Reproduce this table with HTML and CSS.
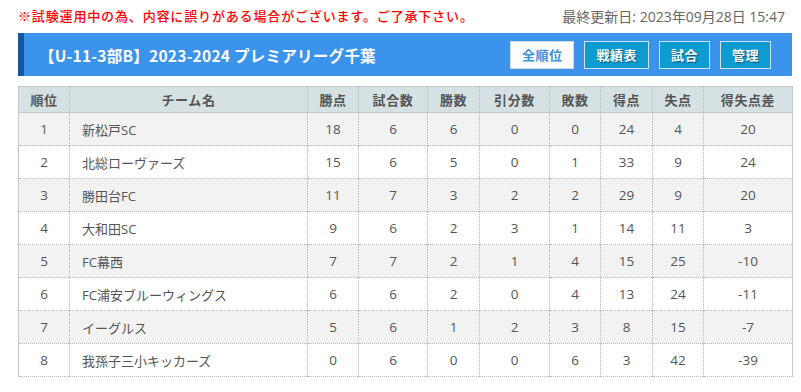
FILE: index.html
```html
<!DOCTYPE html>
<html lang="ja">
<head>
<meta charset="utf-8">
<title>順位表</title>
<link rel="stylesheet" href="styles.css">
</head>
<body>
<div class="page">
  <div class="topline">
    <span class="notice">※試験運用中の為、内容に誤りがある場合がございます。ご了承下さい。</span>
    <span class="updated">最終更新日: 2023年09月28日 15:47</span>
  </div>
  <div class="titlebar">
    <h1 class="title">【U-11-3部B】2023-2024 プレミアリーグ千葉</h1>
    <nav class="btns">
      <a class="btn btn-active">全順位</a>
      <a class="btn">戦績表</a>
      <a class="btn">試合</a>
      <a class="btn">管理</a>
    </nav>
  </div>
  <table class="standings">
    <colgroup>
      <col class="c1"><col class="c2"><col class="c3"><col class="c4"><col class="c5"><col class="c6"><col class="c7"><col class="c8"><col class="c9"><col class="c10">
    </colgroup>
    <thead>
      <tr><th>順位</th><th>チーム名</th><th>勝点</th><th>試合数</th><th>勝数</th><th>引分数</th><th>敗数</th><th>得点</th><th>失点</th><th>得失点差</th></tr>
    </thead>
    <tbody>
      <tr><td>1</td><td class="team">新松戸SC</td><td>18</td><td>6</td><td>6</td><td>0</td><td>0</td><td>24</td><td>4</td><td>20</td></tr>
      <tr><td>2</td><td class="team">北総ローヴァーズ</td><td>15</td><td>6</td><td>5</td><td>0</td><td>1</td><td>33</td><td>9</td><td>24</td></tr>
      <tr><td>3</td><td class="team">勝田台FC</td><td>11</td><td>7</td><td>3</td><td>2</td><td>2</td><td>29</td><td>9</td><td>20</td></tr>
      <tr><td>4</td><td class="team">大和田SC</td><td>9</td><td>6</td><td>2</td><td>3</td><td>1</td><td>14</td><td>11</td><td>3</td></tr>
      <tr><td>5</td><td class="team">FC幕西</td><td>7</td><td>7</td><td>2</td><td>1</td><td>4</td><td>15</td><td>25</td><td>-10</td></tr>
      <tr><td>6</td><td class="team">FC浦安ブルーウィングス</td><td>6</td><td>6</td><td>2</td><td>0</td><td>4</td><td>13</td><td>24</td><td>-11</td></tr>
      <tr><td>7</td><td class="team">イーグルス</td><td>5</td><td>6</td><td>1</td><td>2</td><td>3</td><td>8</td><td>15</td><td>-7</td></tr>
      <tr><td>8</td><td class="team">我孫子三小キッカーズ</td><td>0</td><td>6</td><td>0</td><td>0</td><td>6</td><td>3</td><td>42</td><td>-39</td></tr>
    </tbody>
  </table>
</div>
</body>
</html>
```
FILE: styles.css
```css
* { box-sizing: border-box; }
html, body { margin: 0; padding: 0; background: #fff; }
body {
  font-family: "Open Sans", "Noto Sans CJK JP", sans-serif;
  color: #555;
  font-size: 13px;
}
.page {
  padding: 7px 9px 0 18px;
}
.topline {
  display: flex;
  justify-content: space-between;
  align-items: center;
  height: 19px;
  padding-right: 7px;
  line-height: 19px;
}
.notice {
  color: #f00;
  font-size: 13px;
  letter-spacing: 0.85px;
  font-weight: 500;
}
.updated {
  color: #666;
  font-size: 14px;
}
.titlebar {
  margin-top: 7px;
  height: 43px;
  background: #3b93ec;
  border-left: 6px solid #14579f;
  display: flex;
  align-items: center;
  justify-content: space-between;
  padding: 0 21px 0 15px;
}
.title {
  margin: 0;
  color: #fff;
  font-size: 15.5px;
  font-weight: 700;
  font-family: "Noto Sans CJK JP", sans-serif;
  letter-spacing: 0.25px;
}
.btns {
  display: flex;
  gap: 10px;
}
.btn {
  display: flex;
  align-items: center;
  justify-content: center;
  height: 28px;
  padding: 0 11px;
  background: #0e9bd0;
  border: 1px solid #c8e6f4;
  color: #fff;
  font-weight: 700;
  font-size: 13px;
  font-family: "Noto Sans CJK JP", sans-serif;
  text-shadow: 1px 1px 1px rgba(0,0,0,0.45);
  letter-spacing: 0.5px;
}
.btn-active {
  background: #fff;
  color: #3a8ee0;
  border-color: #d0d8e0;
  text-shadow: none;
}
.standings {
  margin-top: 10px;
  width: 774px;
  border-collapse: collapse;
  table-layout: fixed;
  border: 1px solid #c8c8c8;
  border-bottom: 1px dotted #bbb;
}
.c1 { width: 51px; }
.c2 { width: 238px; }
.c3 { width: 51px; }
.c4 { width: 69px; }
.c5 { width: 52px; }
.c6 { width: 70px; }
.c7 { width: 51px; }
.c8 { width: 52px; }
.c9 { width: 51px; }
.c10 { width: 89px; }
.standings th {
  background: #d5e1e3;
  color: #555;
  font-weight: 700;
  height: 26px;
  font-size: 13px;
  letter-spacing: 0.6px;
  border-left: 1px dotted #bbb;
  border-bottom: 1px solid #c8c8c8;
  padding: 0;
}
.standings td {
  height: 33px;
  text-align: center;
  border-left: 1px dotted #bbb;
  border-top: 1px dotted #bbb;
  padding: 0;
  font-size: 13.5px;
}
.standings tbody tr:first-child td { border-top: none; }
.standings tbody tr:nth-child(odd) td { background: #f2f2f2; }
.standings td.team {
  text-align: left;
  padding-left: 12px;
  font-size: 13px;
}
```
